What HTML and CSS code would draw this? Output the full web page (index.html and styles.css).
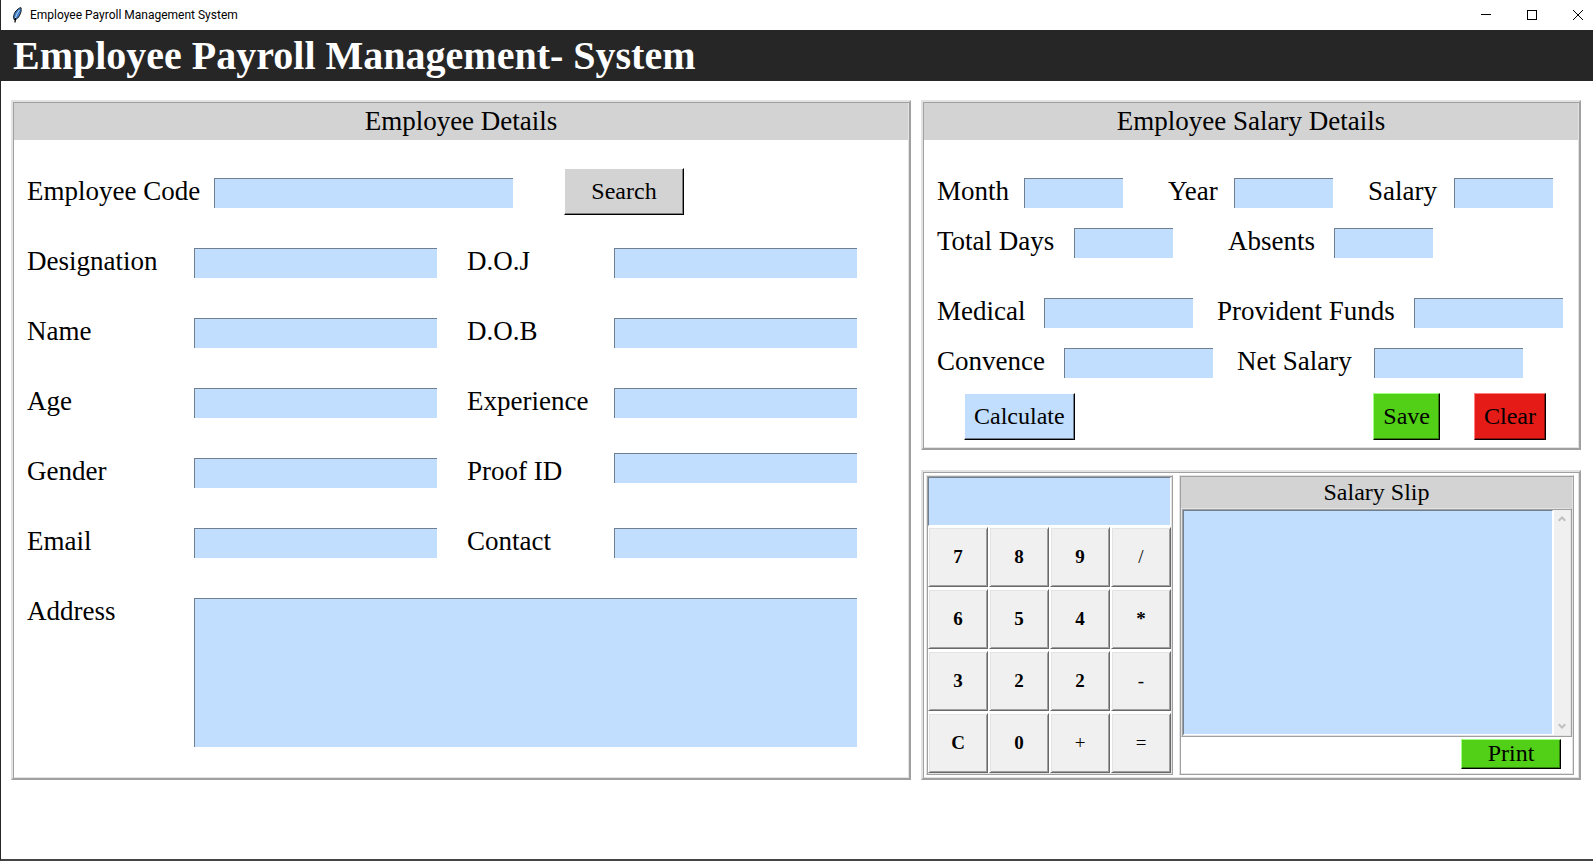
FILE: index.html
```html
<!DOCTYPE html>
<html lang="en">
<head>
<meta charset="utf-8">
<title>Employee Payroll Management System</title>
<link rel="stylesheet" href="styles.css">
</head>
<body>
<div class="window">
  <div class="titlebar">
    <svg class="feather" width="16" height="16" viewBox="0 0 16 16" aria-hidden="true">
      <path d="M5 12.500 C4 9.500 5 5.500 8 3 C9.500 1.500 11 .5 12 .7 C12.500 3 12 6 10.500 8.500 C9.500 10.500 8 12 6.500 12.500 Z" fill="#3f7cc4" stroke="#10151c" stroke-width="1"/>
      <path d="M10.500 3 C8.500 5.500 7 8.500 6.300 11.500" fill="none" stroke="#b9d8f7" stroke-width="1"/>
      <path d="M6.500 11L6 15.500" stroke="#000" stroke-width="1.300"/>
    </svg>
    <span class="caption">Employee Payroll Management System</span>
    <div class="controls">
      <button type="button" aria-label="Minimize"><svg width="10" height="10" viewBox="0 0 10 10"><path d="M0 4.500H10" stroke="#000"/></svg></button>
      <button type="button" aria-label="Maximize"><svg width="10" height="10" viewBox="0 0 10 10"><rect x=".5" y=".5" width="9" height="9" fill="none" stroke="#000"/></svg></button>
      <button type="button" aria-label="Close"><svg width="10" height="10" viewBox="0 0 10 10"><path d="M0 0L10 10M10 0L0 10" stroke="#000"/></svg></button>
    </div>
  </div>
  <h1 class="banner">Employee Payroll Management- System</h1>

  <main class="content">
    <section class="panel employee">
      <h2 class="panel-head">Employee Details</h2>
      <div class="code-row">
        <label for="code">Employee Code</label>
        <input class="field" id="code" type="text">
        <button class="btn btn-gray" type="button">Search</button>
      </div>
      <div class="details">
        <label for="designation">Designation</label><input class="field" id="designation" type="text">
        <label class="second" for="doj">D.O.J</label><input class="field" id="doj" type="text">
        <label for="name">Name</label><input class="field" id="name" type="text">
        <label class="second" for="dob">D.O.B</label><input class="field" id="dob" type="text">
        <label for="age">Age</label><input class="field" id="age" type="text">
        <label class="second" for="experience">Experience</label><input class="field" id="experience" type="text">
        <label for="gender">Gender</label><input class="field" id="gender" type="text">
        <label class="second" for="proof">Proof ID</label><input class="field raised" id="proof" type="text">
        <label for="email">Email</label><input class="field" id="email" type="text">
        <label class="second" for="contact">Contact</label><input class="field" id="contact" type="text">
        <label for="address">Address</label><textarea class="field address" id="address"></textarea>
      </div>
    </section>

    <div class="side">
      <section class="panel">
        <h2 class="panel-head">Employee Salary Details</h2>
        <div class="salary">
          <div class="row row-month">
            <label for="month">Month</label><input class="field" id="month" type="text">
            <label for="year">Year</label><input class="field" id="year" type="text">
            <label for="salary">Salary</label><input class="field" id="salary" type="text">
          </div>
          <div class="row row-days">
            <label for="days">Total Days</label><input class="field" id="days" type="text">
            <label for="absents">Absents</label><input class="field" id="absents" type="text">
          </div>
          <div class="row row-medical">
            <label for="medical">Medical</label><input class="field" id="medical" type="text">
            <label for="funds">Provident Funds</label><input class="field" id="funds" type="text">
          </div>
          <div class="row row-net">
            <label for="convence">Convence</label><input class="field" id="convence" type="text">
            <label for="net">Net Salary</label><input class="field" id="net" type="text">
          </div>
          <div class="actions">
            <button class="btn btn-blue" type="button">Calculate</button>
            <button class="btn btn-green save" type="button">Save</button>
            <button class="btn btn-red" type="button">Clear</button>
          </div>
        </div>
      </section>

      <section class="panel tools">
        <div class="frame calculator">
          <input class="display" type="text" aria-label="Calculator display">
          <div class="keys">
            <button type="button">7</button><button type="button">8</button><button type="button">9</button><button class="thin" type="button">/</button>
            <button type="button">6</button><button type="button">5</button><button type="button">4</button><button type="button">*</button>
            <button type="button">3</button><button type="button">2</button><button type="button">2</button><button class="thin" type="button">-</button>
            <button type="button">C</button><button type="button">0</button><button class="thin" type="button">+</button><button class="thin" type="button">=</button>
          </div>
        </div>
        <div class="frame slip">
          <h2 class="slip-head">Salary Slip</h2>
          <div class="frame slip-body">
            <textarea class="slip-text" aria-label="Salary Slip"></textarea>
            <div class="scrollbar">
              <svg width="8" height="6" viewBox="0 0 8 6" aria-hidden="true"><path d="M.7 4.700L4 1.500L7.300 4.700" fill="none" stroke="#bfbfbf" stroke-width="2"/></svg>
              <svg width="8" height="6" viewBox="0 0 8 6" aria-hidden="true"><path d="M.7 1.300L4 4.500L7.300 1.300" fill="none" stroke="#bfbfbf" stroke-width="2"/></svg>
            </div>
          </div>
          <div class="slip-foot">
            <button class="btn btn-green print" type="button">Print</button>
          </div>
        </div>
      </section>
    </div>
  </main>
</div>
</body>
</html>
```
FILE: styles.css
```css
* { box-sizing: border-box; }

body {
  margin: 0;
  background: #fff;
  color: #000;
  font-family: "Liberation Serif", "Times New Roman", serif;
}

h1, h2 { margin: 0; font-weight: 400; }
button, input, textarea { font-family: inherit; margin: 0; }

.window {
  min-height: 100vh;
  display: flex;
  flex-direction: column;
  border-left: 1px solid #262626;
  border-bottom: 2px solid #444;
}

.titlebar {
  display: flex;
  align-items: center;
  height: 30px;
  padding-left: 8px;
  font: 12px/16px Roboto, "Noto Sans", sans-serif;
}
.caption { margin-left: 5px; }
.controls { display: flex; margin-left: auto; margin-right: -8px; overflow: hidden; }
.controls button {
  display: grid;
  place-items: center;
  width: 46px;
  height: 28px;
  padding: 0;
  border: 0;
  background: none;
}

.banner {
  padding-left: 12px;
  background: #262626;
  color: #fff;
  font-size: 40px;
  font-weight: 700;
  line-height: 51px;
}

.content {
  display: grid;
  grid-template-columns: 900fr 660fr;
  gap: 10px;
  padding: 19px 12px 0 10px;
}
.side { display: flex; flex-direction: column; gap: 20px; }

.panel {
  padding: 1px;
  border: 2px solid;
  border-color: #e3e3e3 #a0a0a0 #a0a0a0 #e3e3e3;
  box-shadow: inset 1px 1px #a0a0a0, inset -1px -1px #e3e3e3;
}
.panel-head {
  background: #d3d3d3;
  font-size: 27px;
  line-height: 37px;
  text-align: center;
}

label {
  font-size: 27px;
  line-height: 27px;
  white-space: nowrap;
}

.field {
  width: 100%;
  height: 30px;
  min-width: 0;
  padding: 0 4px;
  border: 0 solid #708090;
  border-width: 1px 0 0 1px;
  border-radius: 0;
  background: #c1deff;
  font-size: 24px;
  resize: none;
}

.btn {
  height: 47px;
  padding: 0 9px 2px;
  border: 1px solid;
  border-color: #fff #000 #000 #fff;
  color: #000;
  font-size: 24px;
  line-height: 30px;
}
.btn-gray { background: #d3d3d3; box-shadow: inset -1px -1px #7e7e7e; }
.btn-blue { background: #c1deff; box-shadow: inset -1px -1px #708090; }
.btn-green { background: #52d017; border-color: #a0ff80 #000 #000 #a0ff80; box-shadow: inset -1px -1px #317d0e; }
.btn-red { background: #e41b17; border-color: #ff8080 #000 #000 #ff8080; box-shadow: inset -1px -1px #89100e; }

.code-row {
  display: flex;
  align-items: flex-start;
  padding: 28px 0 33px 13px;
}
.code-row label { width: 187px; margin-top: 10px; }
.code-row .field { width: 299px; margin-top: 10px; }
.code-row .btn { width: 120px; margin-left: 51px; }

.details {
  display: grid;
  grid-template-columns: 167px 1fr 177px 1fr;
  row-gap: 40px;
  padding: 0 51px 30px 13px;
}
.details .second { padding-left: 30px; }
.details .raised { margin-top: -5px; }
.details .address { grid-column: 2 / -1; height: 149px; }

.salary { padding: 38px 0 7px 13px; }
.row { display: grid; margin-bottom: 20px; }
.row-month { grid-template-columns: 87px 1fr 111px 1fr 121px 1fr; padding-right: 25px; }
.row-month label:nth-of-type(2) { padding-left: 45px; }
.row-month label:nth-of-type(3) { padding-left: 35px; }
.row-days { grid-template-columns: 137px 1fr 161px 1fr; padding-right: 145px; margin-bottom: 40px; }
.row-days label:nth-of-type(2) { padding-left: 55px; }
.row-medical { grid-template-columns: 107px 1fr 221px 1fr; padding-right: 15px; }
.row-medical label:nth-of-type(2) { padding-left: 24px; }
.row-net { grid-template-columns: 127px 1fr 161px 1fr; padding-right: 55px; margin-bottom: 15px; }
.row-net label:nth-of-type(2) { padding-left: 24px; }
.actions {
  display: flex;
  gap: 34px;
  padding: 0 32px 0 27px;
}
.save { margin-left: auto; }

.tools { display: flex; gap: 6px; padding: 3px 5px 3px 3px; }
.frame {
  padding: 1px;
  border: 1px solid;
  border-color: #e3e3e3 #a0a0a0 #a0a0a0 #e3e3e3;
  box-shadow: inset 1px 1px #a0a0a0, inset -1px -1px #e3e3e3;
}

.calculator { flex: none; width: 247px; }
.display {
  display: block;
  width: 100%;
  height: 49px;
  padding: 0 4px;
  border: 1px solid;
  border-color: #708090 #fff #fff #708090;
  background: #c1deff;
  font-size: 24px;
}
.keys {
  display: grid;
  grid-template-columns: repeat(4, 1fr);
  gap: 2px 1px;
  padding-top: 1px;
}
.keys button {
  height: 60px;
  padding: 0;
  border: 1px solid;
  border-color: #fff #696969 #696969 #fff;
  box-shadow: inset 1px 1px #e3e3e3, inset -1px -1px #a0a0a0;
  background: #f0f0f0;
  color: #000;
  font-size: 19px;
  font-weight: 700;
}
.keys .thin { font-weight: 400; }

.slip { flex: 1; min-width: 0; display: flex; flex-direction: column; }
.slip-head {
  background: #d3d3d3;
  font-size: 24px;
  line-height: 31px;
  text-align: center;
}
.slip-body { flex: 1; display: flex; }
.slip-text {
  flex: 1;
  min-width: 0;
  padding: 4px;
  border: 1px solid;
  border-color: #708090 #fff #fff #708090;
  background: #c1deff;
  font-size: 20px;
  resize: none;
}
.scrollbar {
  display: flex;
  flex-direction: column;
  justify-content: space-between;
  align-items: center;
  width: 17px;
  padding: 6px 0;
  border-left: 1px solid #fff;
  background: #f0f0f0;
}
.slip-foot { display: flex; justify-content: flex-end; padding: 2px 11px 4px 0; }
.print { width: 100px; height: 30px; line-height: 26px; }
```
